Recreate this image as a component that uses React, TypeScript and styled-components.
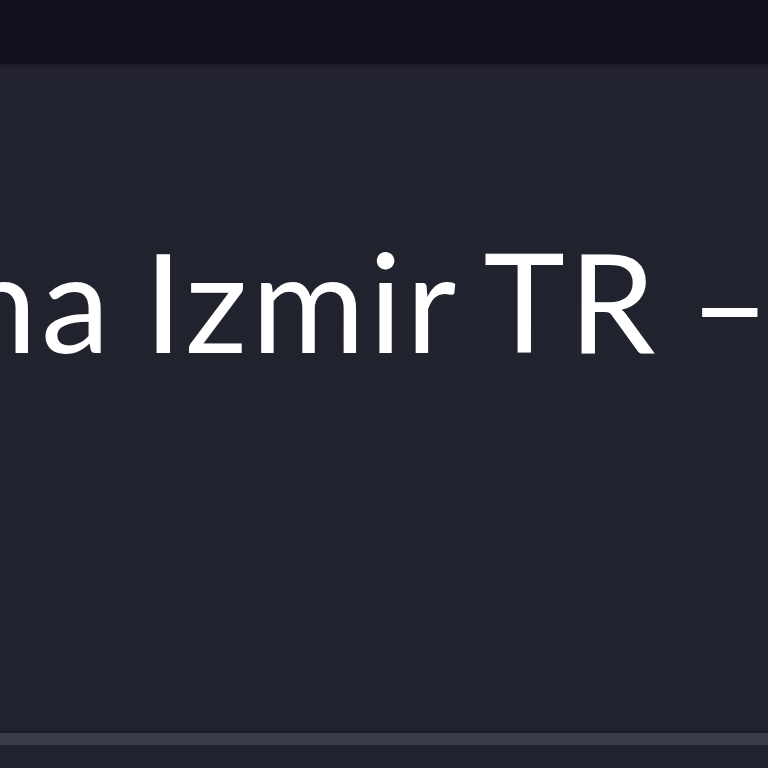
import * as React from "react"
import styled, { createGlobalStyle } from "styled-components"

const GlobalStyle = createGlobalStyle`
  html, body {
    margin: 0;
    padding: 0;
    background: #21232f;
    overflow: hidden;
  }
`

const Page = styled.div`
  width: 768px;
  height: 768px;
  display: flex;
  flex-direction: column;
  background: #21232f;
  overflow: hidden;
`

const TopBar = styled.div`
  height: 64px;
  flex: none;
  background: #13111e;
`

const Panel = styled.div`
  height: 669px;
  flex: none;
  display: flex;
  flex-direction: column;
  background: linear-gradient(to bottom, #1a1825 0px, #24222f 5px, #22222f 12px, #20232e 24px, #21232f 100%);
  overflow: hidden;
`

const TitleRow = styled.div`
  padding-top: 167px;
  white-space: nowrap;
  overflow: hidden;
`

const Title = styled.h1<{ $shift: number }>`
  margin: 0 0 0 ${p => p.$shift}px;
  font-family: "Lato", "Open Sans", sans-serif;
  font-weight: 400;
  font-size: 138px;
  line-height: 1;
  color: #ffffff;
  letter-spacing: 4px;
  word-spacing: -9px;
`

const Divider = styled.div`
  height: 12px;
  flex: none;
  background: #3b3c4a;
  box-shadow: 0 -2px 2px #1c1d28, 0 2px 2px #1c1d28;
`

const Footer = styled.div`
  flex: 1;
  background: #21232f;
`

export default function App() {
  return (
    <>
      <GlobalStyle />
      <Page>
        <TopBar />
        <Panel>
          <TitleRow>
            <Title $shift={-40}>na Izmir TR – Türkiye</Title>
          </TitleRow>
        </Panel>
        <Divider />
        <Footer />
      </Page>
    </>
  )
}
